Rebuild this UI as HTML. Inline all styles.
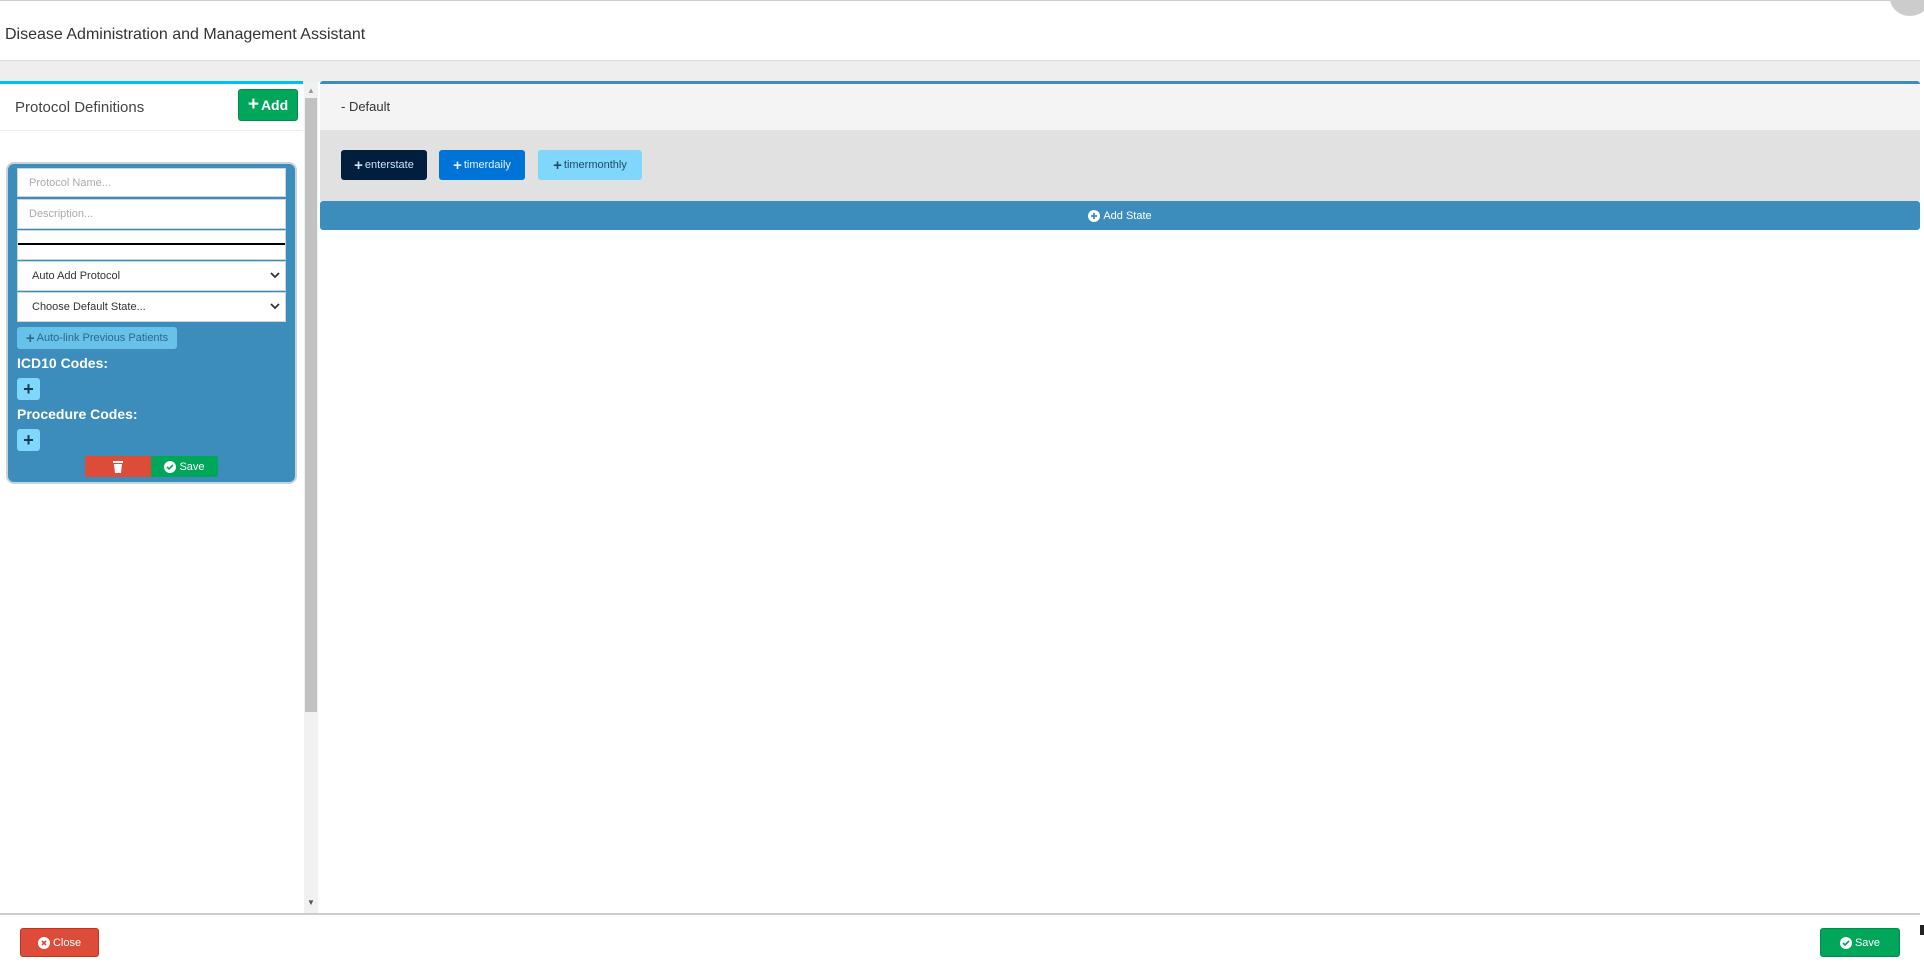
<!DOCTYPE html>
<html><head><meta charset="utf-8"><style>
*{box-sizing:border-box;margin:0;padding:0}
body{width:1924px;height:964px;position:relative;background:#fff;font-family:"Liberation Sans",sans-serif;overflow:hidden}
.a{position:absolute}
.inp{position:absolute;left:17px;width:269px;background:#fff;border:1px solid #c9d6e0;font-size:11px;color:#aaa;padding-left:11px;line-height:28px}
.btn{position:absolute;border-radius:3px;color:#fff;font-size:11px;display:flex;align-items:center;justify-content:center}
.chev{position:absolute;right:5px;top:10px}
</style></head><body>
<div class="a" style="left:0;top:0;width:1924px;height:1px;background:#ccc"></div>
<div class="a" style="left:1890px;top:-20px;width:40px;height:36px;border-radius:50%;background:#ccc"></div>
<div class="a" style="left:5px;top:26px;font-size:16px;color:#333">Disease Administration and Management Assistant</div>
<div class="a" style="left:0;top:60px;width:1920px;height:22px;background:#eee;border-top:1px solid #ddd"></div>
<!-- left panel -->
<div class="a" style="left:0;top:81px;width:303px;height:833px;background:#fff;border-top:3px solid #00c0ef"></div>
<div class="a" style="left:0;top:130px;width:303px;height:1px;background:#eee"></div>
<div class="a" style="left:15px;top:99px;font-size:15px;color:#444">Protocol Definitions</div>
<div class="btn" style="left:238px;top:89px;width:60px;height:32px;background:#00a65a;border:1px solid #008d4c;font-size:14px;font-weight:bold"><b style="font-size:19px;margin-right:2px">+</b>Add</div>
<div class="a" style="left:304px;top:82px;width:14px;height:832px;background:#f1f1f1"></div>
<div class="a" style="left:305px;top:98px;width:12px;height:614px;background:#c1c1c1"></div>
<div class="a" style="left:307px;top:86px;font-size:8px;color:#999">▲</div>
<div class="a" style="left:307px;top:898px;font-size:8px;color:#555">▼</div>
<div class="a" style="left:6px;top:162px;width:291px;height:322px;background:#3c8dbc;border:2px solid #c8d2da;border-radius:8px"></div>
<div class="inp" style="top:168px;height:29px">Protocol Name...</div>
<div class="inp" style="top:199px;height:30px">Description...</div>
<div class="inp" style="top:230px;height:30px"></div>
<div class="a" style="left:18px;top:243px;width:267px;height:2px;background:#000"></div>
<div class="inp" style="top:261px;height:30px;color:#333;padding-left:14px">Auto Add Protocol<svg class="chev" width="10" height="7" viewBox="0 0 10 7"><path d="M1 1l4 4 4-4" stroke="#333" stroke-width="1.8" fill="none"/></svg></div>
<div class="inp" style="top:292px;height:30px;color:#333;padding-left:14px">Choose Default State...<svg class="chev" width="10" height="7" viewBox="0 0 10 7"><path d="M1 1l4 4 4-4" stroke="#333" stroke-width="1.8" fill="none"/></svg></div>
<div class="btn" style="left:17px;top:327px;width:160px;height:22px;background:#67c1e8;color:#2b6a8c;font-size:11px"><b style="font-size:15px;margin-right:2px">+</b>Auto-link Previous Patients</div>
<div class="a" style="left:17px;top:355px;font-size:14px;font-weight:bold;color:#fff">ICD10 Codes:</div>
<div class="btn" style="left:17px;top:378px;width:23px;height:22px;background:#7fd7fb;color:#1a3a50;font-size:18px;font-weight:bold">+</div>
<div class="a" style="left:17px;top:406px;font-size:14px;font-weight:bold;color:#fff">Procedure Codes:</div>
<div class="btn" style="left:17px;top:429px;width:23px;height:22px;background:#7fd7fb;color:#1a3a50;font-size:18px;font-weight:bold">+</div>
<div class="btn" style="left:85px;top:456px;width:66px;height:21px;background:#dd4b39;border-radius:2px 0 0 2px"><svg width="10" height="12" viewBox="0 0 10 12"><rect x="0" y="0" width="10" height="2" fill="#fff"/><path d="M1 3h8l-1 9H2z" fill="#fff"/></svg></div>
<div class="btn" style="left:151px;top:456px;width:67px;height:21px;background:#00a65a;border-radius:0 2px 2px 0"><svg width="12" height="12" viewBox="0 0 12 12" style="margin-right:3px"><circle cx="6" cy="6" r="6" fill="#fff"/><path d="M3 6l2 2 4-4" stroke="#00a65a" stroke-width="1.6" fill="none"/></svg>Save</div>
<!-- right panel -->
<div class="a" style="left:320px;top:81px;width:1600px;height:49px;background:#f4f4f4;border-top:3px solid #3c8dbc;border-radius:3px 3px 0 0"></div>
<div class="a" style="left:341px;top:99px;font-size:13px;color:#333">- Default</div>
<div class="a" style="left:320px;top:130px;width:1600px;height:71px;background:#e1e1e1"></div>
<div class="btn" style="left:341px;top:150px;width:86px;height:30px;background:#001f3f;color:#cfe3f5"><b style="font-size:15px;margin-right:2px">+</b>enterstate</div>
<div class="btn" style="left:439px;top:150px;width:86px;height:30px;background:#0073d7;color:#e6f1fb"><b style="font-size:15px;margin-right:2px">+</b>timerdaily</div>
<div class="btn" style="left:538px;top:150px;width:104px;height:30px;background:#7fd7fb;color:#1e4c66"><b style="font-size:15px;margin-right:2px">+</b>timermonthly</div>
<div class="btn" style="left:320px;top:201px;width:1600px;height:29px;background:#3c8dbc"><svg width="12" height="12" viewBox="0 0 12 12" style="margin-right:3px"><circle cx="6" cy="6" r="6" fill="#fff"/><path d="M6 3v6M3 6h6" stroke="#3c8dbc" stroke-width="1.8"/></svg>Add State</div>
<!-- footer -->
<div class="a" style="left:0;top:913px;width:1920px;height:2px;background:#ccc"></div>
<div class="btn" style="left:20px;top:928px;width:79px;height:29px;background:#dd4b39;border:1px solid #c23321"><svg width="12" height="12" viewBox="0 0 12 12" style="margin-right:3px"><circle cx="6" cy="6" r="6" fill="#fff"/><path d="M4 4l4 4M8 4l-4 4" stroke="#dd4b39" stroke-width="1.6"/></svg>Close</div>
<div class="btn" style="left:1820px;top:928px;width:80px;height:29px;background:#00a65a;border:1px solid #008d4c"><svg width="12" height="12" viewBox="0 0 12 12" style="margin-right:3px"><circle cx="6" cy="6" r="6" fill="#fff"/><path d="M3 6l2 2 4-4" stroke="#00a65a" stroke-width="1.6" fill="none"/></svg>Save</div>
<div class="a" style="left:1920px;top:925px;width:4px;height:10px;background:#222"></div>
</body></html>
